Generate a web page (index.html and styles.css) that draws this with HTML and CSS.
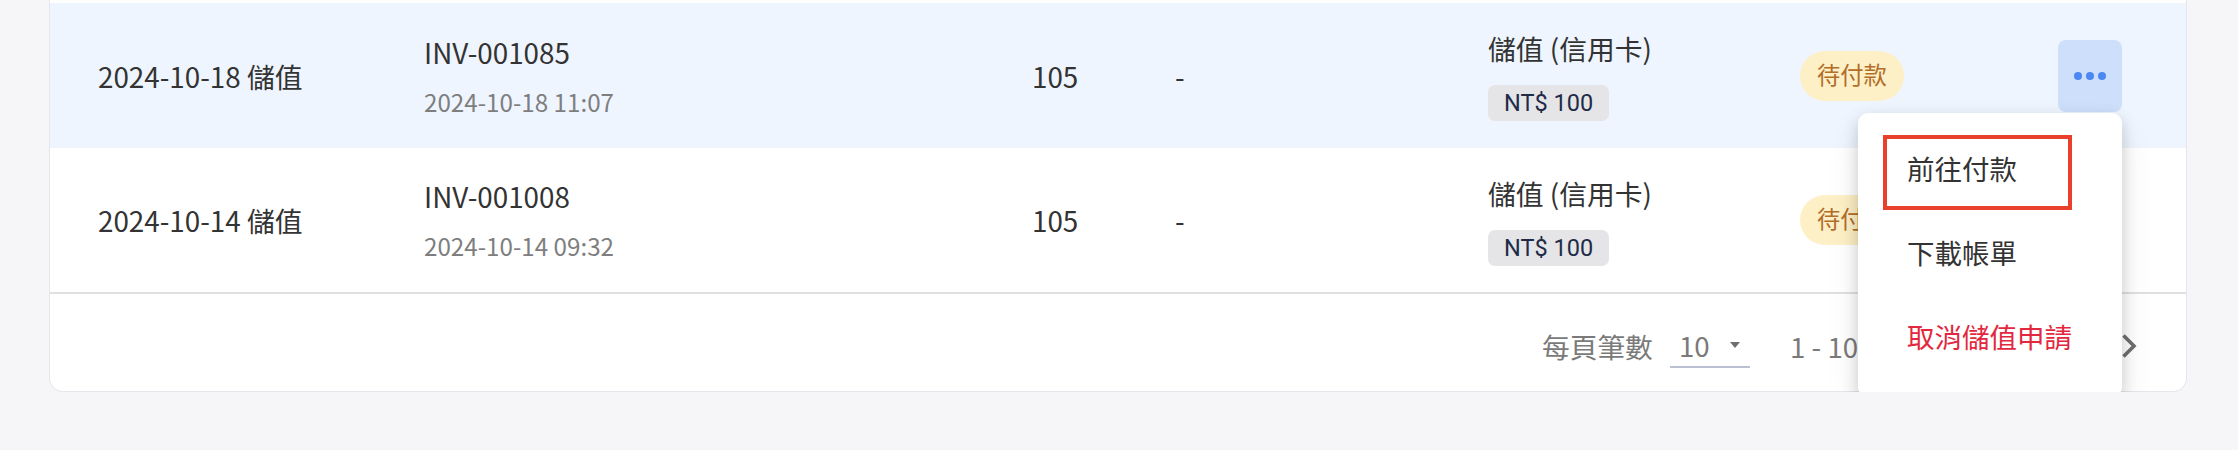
FILE: index.html
```html
<!DOCTYPE html>
<html lang="zh-Hant">
<head>
<meta charset="utf-8">
<title>儲值紀錄</title>
<link rel="stylesheet" href="styles.css">
</head>
<body>
<div class="page">
  <div class="card">
    <div class="row row-active">
      <div class="cell">2024-10-18 儲值</div>
      <div class="cell stack">
        <div class="line-main">INV-001085</div>
        <div class="line-sub">2024-10-18 11:07</div>
      </div>
      <div class="cell">105</div>
      <div class="cell">-</div>
      <div class="cell stack stack-chip">
        <div class="line-main">儲值 (信用卡)</div>
        <div><span class="amount">NT$ 100</span></div>
      </div>
      <div class="cell"><span class="status">待付款</span></div>
      <div class="cell action">
        <button class="more more-open" type="button" aria-label="更多">
          <svg width="40" height="12" viewBox="0 0 40 12"><circle cx="8" cy="6" r="4"/><circle cx="20" cy="6" r="4"/><circle cx="32" cy="6" r="4"/></svg>
        </button>
        <div class="menu">
          <div class="menu-item menu-item-marked">前往付款<span class="mark"></span></div>
          <div class="menu-item">下載帳單</div>
          <div class="menu-item menu-item-danger">取消儲值申請</div>
        </div>
      </div>
    </div>
    <div class="row">
      <div class="cell">2024-10-14 儲值</div>
      <div class="cell stack">
        <div class="line-main">INV-001008</div>
        <div class="line-sub">2024-10-14 09:32</div>
      </div>
      <div class="cell">105</div>
      <div class="cell">-</div>
      <div class="cell stack stack-chip">
        <div class="line-main">儲值 (信用卡)</div>
        <div><span class="amount">NT$ 100</span></div>
      </div>
      <div class="cell"><span class="status">待付款</span></div>
      <div class="cell action">
        <button class="more" type="button" aria-label="更多">
          <svg width="40" height="12" viewBox="0 0 40 12"><circle cx="8" cy="6" r="4"/><circle cx="20" cy="6" r="4"/><circle cx="32" cy="6" r="4"/></svg>
        </button>
      </div>
    </div>
    <div class="footer">
      <div class="per-page">每頁筆數</div>
      <div class="select"><span>10</span><span class="caret"></span></div>
      <div class="range">1 - 10</div>
      <div class="next">
        <svg width="24" height="24" viewBox="0 0 24 24"><path d="M6.5 1.5 L17 12 L6.5 22.5" fill="none" stroke="#6f6f6f" stroke-width="3.6"/></svg>
      </div>
    </div>
  </div>
</div>
</body>
</html>
```
FILE: styles.css
```css
* { box-sizing: border-box; }

html, body {
  margin: 0;
  padding: 0;
  background: #f6f6f8;
  font-family: "Noto Sans CJK TC", "Noto Sans", sans-serif;
  color: #333;
}

.page {
  padding: 0 51px 0 49px;
}

.card {
  background: #fff;
  border: 1px solid #e6e6ec;
  border-top: none;
  border-radius: 0 0 14px 14px;
  padding-top: 3px;
}

.row {
  display: grid;
  grid-template-columns: 326px 608px 143px 313px 312px 258px 64px;
  align-items: center;
  height: 144px;
  padding-left: 48px;
  font-size: 27.8px;
}

.row-active {
  height: 145px;
  background: #eef5fe;
}

.cell {
  line-height: 36px;
  white-space: nowrap;
}

.stack {
  display: flex;
  flex-direction: column;
  gap: 16px;
}

.stack-chip {
  gap: 15px;
}

.line-main {
  line-height: 36px;
}

.line-sub {
  line-height: 32px;
  font-size: 24.2px;
  color: #7e7e7e;
}

.amount {
  display: inline-flex;
  align-items: center;
  height: 36px;
  padding: 0 16px;
  border-radius: 7px;
  background: #e5e5e7;
  color: #1f2b47;
  font-family: Roboto, "Noto Sans CJK TC", sans-serif;
  font-size: 23.5px;
}

.status {
  display: inline-flex;
  align-items: center;
  height: 50px;
  padding: 0 17px;
  border-radius: 25px;
  background: #fdf0c6;
  color: #b26d28;
  font-family: Roboto, "Noto Sans CJK TC", sans-serif;
  font-size: 23.3px;
}

.action {
  position: relative;
}

.more {
  display: flex;
  align-items: center;
  justify-content: center;
  width: 64px;
  height: 72px;
  border: none;
  border-radius: 8px;
  background: transparent;
  padding: 0;
  fill: #9ab8e8;
  visibility: hidden;
}

.more-open {
  visibility: visible;
  background: #cddffb;
  fill: #4b88f1;
}

.menu {
  position: absolute;
  top: 73px;
  right: 0;
  z-index: 10;
  width: 264px;
  padding: 16px 0;
  background: #fff;
  border-radius: 10px;
  box-shadow: 0 6px 16px rgba(0, 0, 0, 0.17), 0 16px 34px rgba(0, 0, 0, 0.08);
  font-family: Roboto, "Noto Sans CJK TC", sans-serif;
}

.menu-item {
  position: relative;
  display: flex;
  align-items: center;
  height: 84px;
  padding-left: 49px;
  font-size: 27.5px;
  color: #333;
}

.menu-item-danger {
  color: #e2283e;
}

.mark {
  position: absolute;
  left: 25px;
  top: 6px;
  width: 189px;
  height: 75px;
  border: 4px solid #e8402b;
}

.footer {
  display: grid;
  grid-template-columns: 128px 80px 367px 24px;
  align-items: center;
  height: 99px;
  padding: 6px 0 0 1492px;
  border-top: 2px solid #e0e0e0;
  color: #7a7a7a;
  font-size: 27.7px;
}

.select {
  display: flex;
  align-items: center;
  justify-content: space-between;
  height: 44px;
  padding: 0 10px 0 9px;
  border-bottom: 2px solid #bac0d2;
}

.caret {
  width: 0;
  height: 0;
  border-left: 5px solid transparent;
  border-right: 5px solid transparent;
  border-top: 6px solid #6f6f6f;
}

.range {
  padding-left: 40px;
  white-space: nowrap;
}

.next {
  display: flex;
}
```
